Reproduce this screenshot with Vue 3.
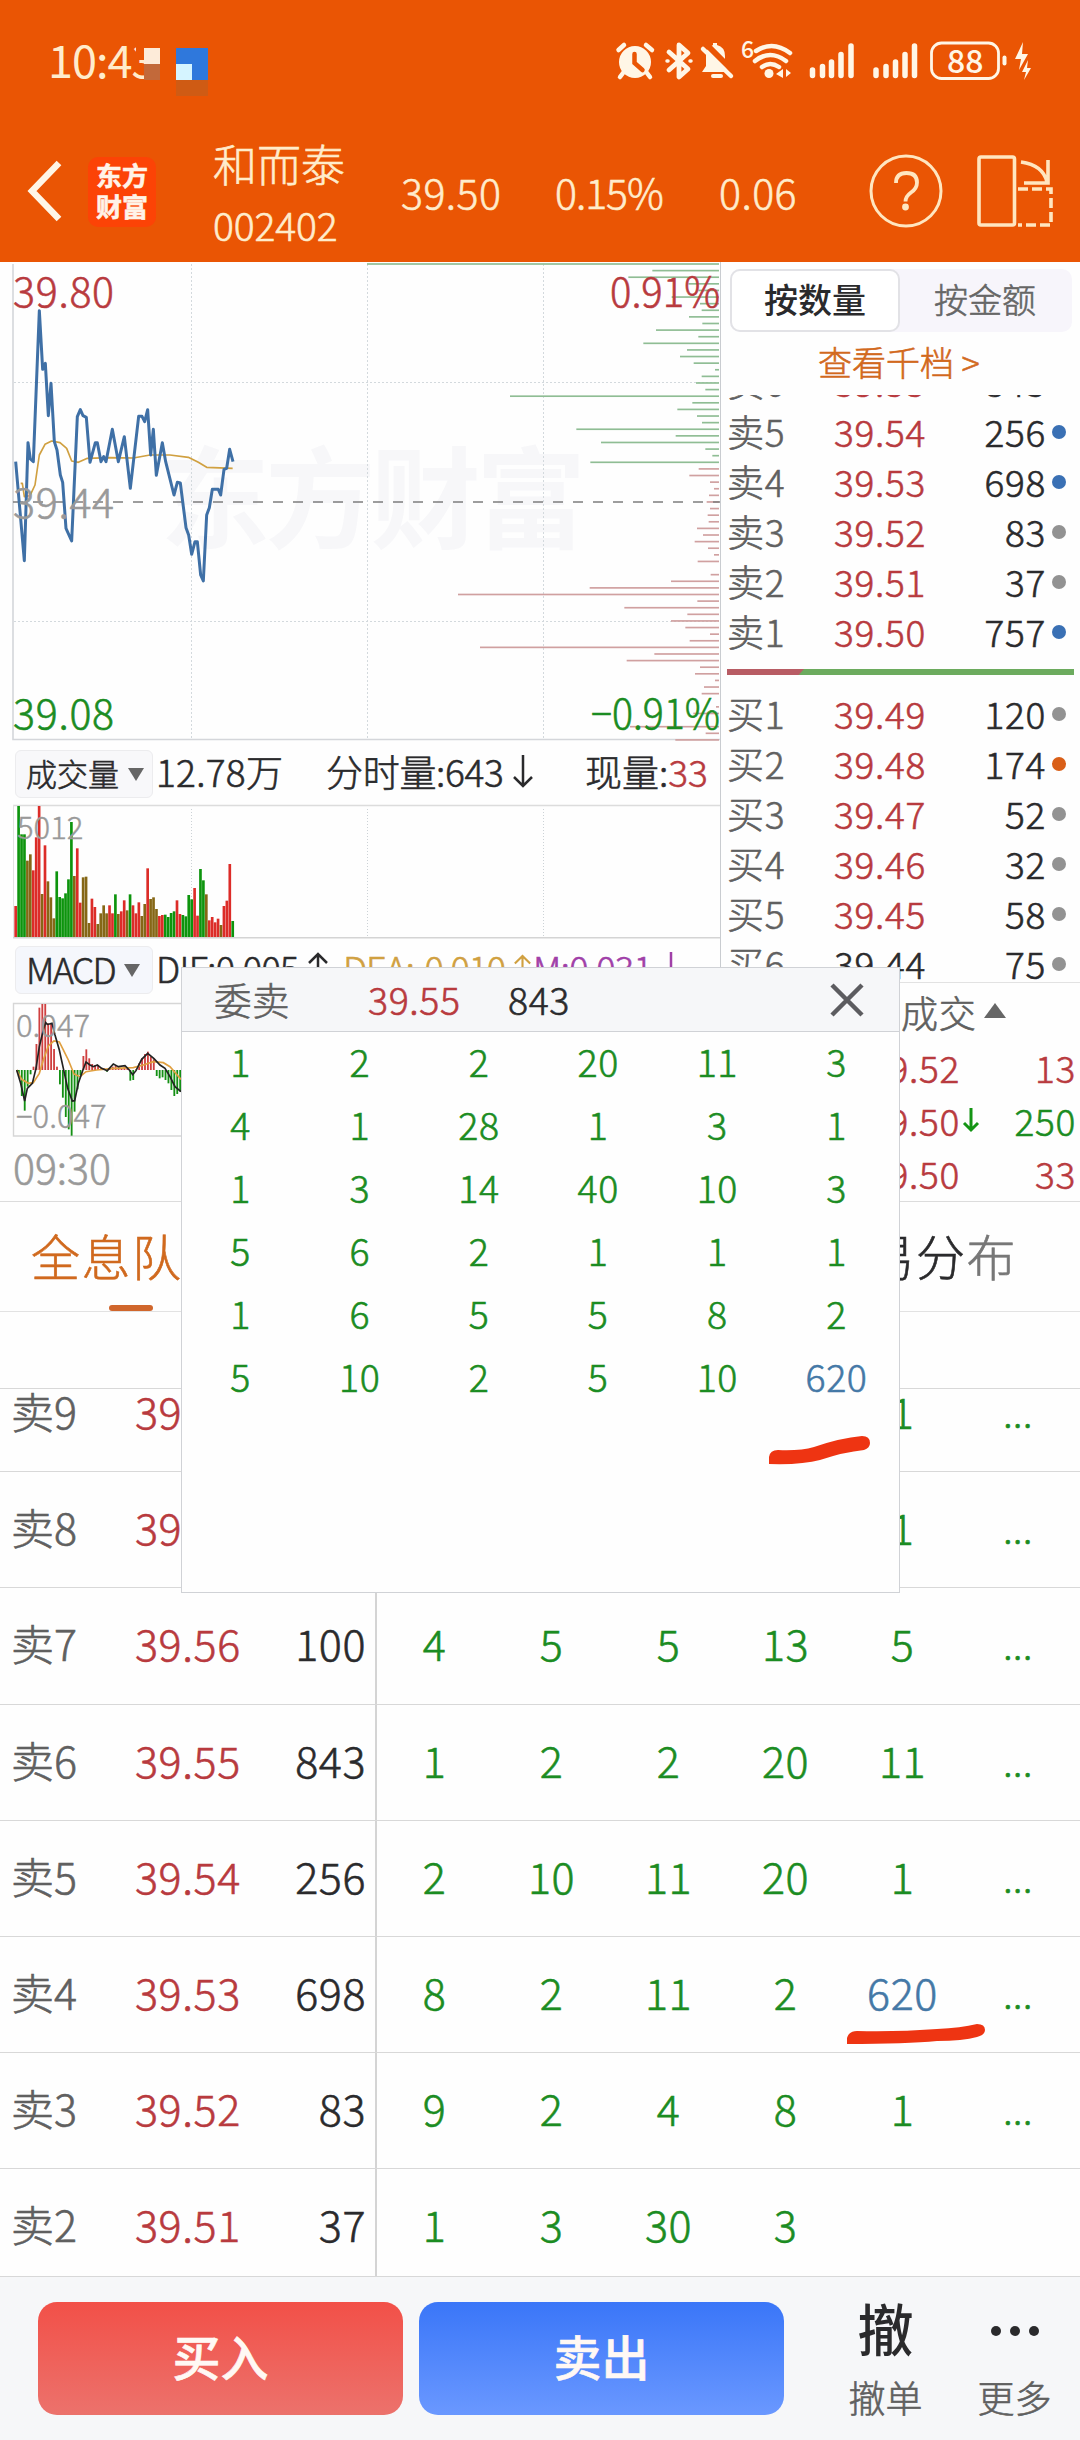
<template>
  <div class="page">
    <header class="top">
      <div class="status">
        <div class="clock">
          10:43
          <i class="erase"></i>
          <i class="px white"></i>
          <i class="px brown"></i>
          <i class="px blue"></i>
          <i class="px light"></i>
          <i class="px shade"></i>
        </div>
        <svg class="status-icons" width="422" height="44" viewBox="612 40 422 44">
          <g fill="none" stroke="#fff6e6" stroke-width="4.5" stroke-linecap="round">
            <circle cx="635" cy="62" r="16" fill="#fff6e6" stroke="none" />
            <path d="M618.500 50l5.500-5M652 50l-6-5M623 73l-3 4M647 73l3 4" />
            <path d="M634.500 54v9l8 7" stroke="#ea5504" stroke-width="4.500" />
            <path d="M669 52l19 17-9 8V45l9 8-19 17" stroke-width="4.800" stroke-linejoin="round" />
            <path d="M667 61h1M690 61h1" stroke-width="3.500" />
            <path d="M702 72h27l-4-6V56q0-9-8-11v-2h-4v2q-7 3-7 10v11z" fill="#fff6e6" stroke="none" />
            <path d="M705 43l32 32" stroke="#ea5504" stroke-width="6" />
            <path d="M703 49l28 27" />
            <path d="M713 76h8" stroke-width="4" />
            <path d="M756 51q17-11 34 2M755 61q15-12 31 0M762 67q8-6 17 0" stroke-width="4.500" />
            <circle cx="769" cy="73.500" r="4.500" fill="#fff6e6" stroke="none" />
            <path d="M776 74l7-5v9zM786 69l5 4-5 4z" fill="#fff6e6" stroke="none" />
            <path d="M812.500 70v5.500M822.500 66.500v9M831.500 62v13.500M841 54.500v21M851 46v29.500" stroke-width="5.500" />
            <path d="M876 70v5.500M886 66.500v9M895.500 62v13.500M905 54.500v21M914.500 46v29.500" stroke-width="5.500" />
            <rect x="931.500" y="43" width="67" height="35.500" rx="10" stroke-width="2.800" />
            <path d="M1004.500 57.500v6" stroke-width="4" />
            <path d="M1023 42l-8 17h6l-2 11 9-16h-6zM1028 60l-6 12h4l-2 8 7-12h-4z" fill="#fff6e6" stroke="none" />
          </g>
          <text x="741" y="58" class="wifi-gen">6</text>
          <text x="947" y="73" class="battery">88</text>
        </svg>
      </div>
      <div class="nav">
        <svg class="back" width="40" height="66" viewBox="0 0 40 66">
          <path d="M35 5L8 33l27 28" fill="none" stroke="#fff6e6" stroke-width="6.500" />
        </svg>
        <div class="logo"><span>东方</span><span>财富</span></div>
        <div class="stock">
          <div class="name">和而泰</div>
          <div class="code">002402</div>
        </div>
        <div class="quote">
          <span class="q1">39.50</span>
          <span class="q2">0.15%</span>
          <span class="q3">0.06</span>
        </div>
        <svg class="help" width="76" height="76" viewBox="0 0 76 76" fill="none" stroke="#ffe6c0" stroke-width="3">
          <circle cx="37" cy="38" r="35" />
          <path d="M27 30q0-10 10.500-10T48 29.500q0 6-6 10-5.500 4-5.500 9" stroke-width="3.800" />
          <circle cx="36.500" cy="54" r="1.900" fill="#ffe6c0" />
        </svg>
        <svg class="rotate" width="78" height="74" viewBox="0 0 78 74" fill="none" stroke="#ffe6c0" stroke-width="3.600">
          <rect x="2" y="3" width="35.500" height="68" rx="2" />
          <path d="M44 8q22 3 26 20M71 6v23H47" />
          <path d="M41 35h33v36H41" stroke-dasharray="10 4" />
        </svg>
      </div>
    </header>

    <section class="market">
      <div class="charts">
        <svg width="720" height="482" viewBox="0 262 720 482">
          <text x="160" y="540" class="watermark" textLength="426">东方财富</text>
          <g stroke="#d3d9dd" stroke-width="1" stroke-dasharray="2 2">
            <path d="M191.500 264V738M367.500 264V738M543.500 264V738M14 382.500H719M14 621.500H719" />
          </g>
          <path d="M13 264V739.500H720" fill="none" stroke="#d4d6da" stroke-width="1.600" />
          <g transform="translate(340 255) scale(.33333)">
            <rect
              v-for="(w, i) in depth"
              :key="i"
              :x="1137 - w"
              :y="24.500 + i * 19.83"
              :width="w"
              height="5"
              :fill="i < 31 ? '#8fbd94' : '#d0a0a0'"
            />
          </g>
          <path d="M13 502H720" stroke="#7d7d7d" stroke-width="1.700" stroke-dasharray="10 10" />
          <g transform="translate(0 255) scale(.33333)" fill="none" stroke-linejoin="round">
            <polyline :points="avgLine" stroke="#d0a040" stroke-width="5" />
            <polyline :points="priceLine" stroke="#3f70a6" stroke-width="9" />
          </g>
          <text x="13" y="307" class="axis red" textLength="101">39.80</text>
          <text x="13" y="518" class="axis gray" textLength="101">39.44</text>
          <text x="13" y="728.500" class="axis green" textLength="101">39.08</text>
          <text x="610" y="307" class="axis red" textLength="110" lengthAdjust="spacingAndGlyphs">0.91%</text>
          <text x="591" y="728.500" class="axis green" textLength="129" lengthAdjust="spacingAndGlyphs">−0.91%</text>
        </svg>

        <div class="info">
          <div class="select">成交量<i></i></div>
          <span class="total">12.78万</span>
          <span class="minute">分时量:643<svg width="20" height="34" viewBox="0 0 20 34"><path d="M10 1v31M1 23l9 9 9-9" /></svg></span>
          <span>现量:<b class="red">33</b></span>
        </div>

        <svg width="720" height="135" viewBox="0 804 720 135">
          <path d="M13 805.500H720" stroke="#dcdcdc" stroke-width="1.300" />
          <path d="M13.500 805V938" stroke="#e2e2e2" />
          <path d="M191.500 809V936M367.500 809V936M543.500 809V936" stroke="#ccd2d6" stroke-dasharray="1 2" />
          <g transform="translate(0 740) scale(.33333)">
            <rect
              v-for="(v, i) in volumes"
              :key="i"
              :x="43 + i * 8.800"
              :y="v[0]"
              width="8"
              :height="593 - v[0]"
              :fill="volumeColor[v[1]]"
            />
          </g>
          <text x="17" y="839" class="small-axis">5012</text>
          <path d="M13 937.700H720" stroke="#d4d4d4" stroke-width="1.600" />
        </svg>

        <div class="info macd">
          <div class="select">MACD<i></i></div>
          <span class="dif">DIF:0.005<svg width="20" height="30" viewBox="0 0 20 30"><path d="M10 30V2M1 11l9-9 9 9" /></svg></span>
          <span class="dea">DEA:-0.010<svg width="17" height="30" viewBox="0 0 20 30"><path d="M10 30V2M1 11l9-9 9 9" /></svg></span>
          <span class="m">M:0.031<svg width="20" height="30" viewBox="0 0 20 30"><path d="M10 0v28M1 19l9 9 9-9" /></svg></span>
        </div>

        <svg width="720" height="138" viewBox="0 1001 720 138">
          <path d="M720 1003.500H13.500V1136H720" fill="none" stroke="#d6d6d6" stroke-width="1.400" />
          <g transform="translate(0 740) scale(.33333)" fill="none">
            <rect
              v-for="(v, i) in macdBars"
              :key="i"
              :x="45 + i * 8.800"
              :y="Math.min(v, 990)"
              width="5.500"
              :height="Math.abs(v - 990)"
              :fill="v < 990 ? '#cf4040' : '#149014'"
            />
            <polyline :points="deaLine" stroke="#e0a040" stroke-width="5" />
            <polyline :points="difLine" stroke="#222" stroke-width="5" />
          </g>
          <text x="16" y="1036.500" class="small-axis">0.047</text>
          <text x="16" y="1127.500" class="small-axis">−0.047</text>
        </svg>
        <div class="time">09:30</div>
      </div>

      <aside class="book">
        <div class="switch">
          <span class="on">按数量</span>
          <span>按金额</span>
        </div>
        <div class="more-levels">查看千档 &gt;</div>
        <div class="levels sells">
          <div v-for="r in sells" :key="r.name" class="level">
            <span>{{ r.name }}</span>
            <span class="price">{{ r.price }}</span>
            <span class="qty">{{ r.qty }}</span>
            <i :class="['dot', r.dot]"></i>
          </div>
        </div>
        <div class="ratio"><i></i></div>
        <div class="levels buys">
          <div v-for="r in buys" :key="r.name" class="level">
            <span>{{ r.name }}</span>
            <span :class="['price', { flat: r.price === '39.44' }]">{{ r.price }}</span>
            <span class="qty">{{ r.qty }}</span>
            <i :class="['dot', r.dot]"></i>
          </div>
        </div>
        <div class="trades-head">成交<i></i></div>
        <div v-for="(t, i) in trades" :key="i" class="trade">
          <span class="red">{{ t.price }}</span>
          <svg width="18" height="26" viewBox="0 0 18 26">
            <path v-if="t.down" d="M9 1v22M2 16l7 7 7-7" fill="none" stroke="#149414" stroke-width="3" />
          </svg>
          <span :class="['vol', t.down ? 'green' : 'red']">{{ t.qty }}</span>
        </div>
      </aside>
    </section>

    <nav class="tabs">
      <div class="tab active">全息队列</div>
      <div class="tab last">交易分<span>布</span></div>
    </nav>
    <div class="spacer"></div>

    <section class="queue">
      <div v-for="r in queue" :key="r.name" class="row">
        <div class="left">
          <span class="label">{{ r.name }}</span>
          <span class="red">{{ r.price }}</span>
          <span class="qty">{{ r.qty }}</span>
        </div>
        <div class="orders">
          <span v-for="(n, i) in r.orders" :key="i" :class="{ big: n === 620, dots: n === '...' }">{{ n }}</span>
        </div>
      </div>
    </section>

    <footer class="actions">
      <button class="buy">买入</button>
      <button class="sell">卖出</button>
      <div class="action">
        <div class="glyph">撤</div>
        <div>撤单</div>
      </div>
      <div class="action">
        <div class="glyph dots3"><i></i><i></i><i></i></div>
        <div>更多</div>
      </div>
    </footer>

    <div class="popup">
      <div class="popup-head">
        <span class="side">委卖</span>
        <span class="red pr">39.55</span>
        <span>843</span>
        <svg class="close" width="34" height="34" viewBox="0 0 34 34">
          <path d="M2 2l30 30M32 2L2 32" stroke="#5c5c60" stroke-width="4.500" />
        </svg>
      </div>
      <div class="popup-grid">
        <span v-for="(n, i) in popupOrders" :key="i" :class="{ big: n === 620 }">{{ n }}</span>
      </div>
    </div>

    <svg class="marks" width="1080" height="2440" viewBox="0 0 1080 2440">
      <path d="M769 1464v-7q1-7 9-7 22 1 36-3 26-9 48-11 8 0 8 7 0 5-6 7-20 2-44 10-18 5-51 4z" />
      <path d="M847 2044v-6q2-7 10-7 40 1 80-2 24-1 40-5 8 0 8 6 0 5-8 7-14 4-40 4-30 3-90 3z" />
    </svg>
  </div>
</template>

<script setup>
const priceLine =
  "47,620 73,917 84,563 91,612 100,620 118,167 128,343 136,325 145,482 153,385 163,560 171,585 181,660 188,682 198,820 215,858 232,485 241,464 249,482 259,487 270,622 286,563 292,563 303,620 311,605 318,620 337,523 355,620 373,545 391,700 416,484 426,484 434,500 443,464 452,600 460,523 469,661 487,563 497,620 522,720 532,682 541,684 558,818 566,840 575,898 585,860 592,860 602,960 610,978 620,780 628,758 637,703 655,703 662,720 672,643 680,640 689,583 699,620";
const avgLine =
  "62,685 67,685 73,725 90,722 105,690 118,600 135,568 155,558 180,563 200,580 215,618 235,622 262,610 330,608 400,609 450,600 510,600 565,607 595,622 620,637 698,640";
const difLine =
  "50,990 62,1030 74,1083 82,1045 97,1030 108,985 118,920 130,870 137,848 142,853 148,852 156,850 165,885 178,930 190,985 203,1045 217,1083 224,1082 235,1030 248,992 258,966 270,975 280,980 292,975 305,985 322,992 340,972 355,980 375,977 388,990 398,1004 408,992 425,958 443,940 462,956 480,975 495,985 510,1010 525,1040 543,1055";
const deaLine =
  "50,990 65,1018 85,1030 100,1028 118,1000 130,960 145,918 162,903 178,906 190,930 205,960 222,1002 240,1010 258,995 290,990 340,985 400,983 430,975 460,965 490,968 510,980 543,1018";

// resting orders per price, sell side first
const depth = [
  1056, 200, 272, 92, 62, 142, 57, 52, 90, 50, 189, 62, 227, 96, 117, 76, 12, 52, 69, 41, 627, 80, 125, 66, 51, 428,
  130, 354, 41, 20, 386, 61, 89, 27, 15, 30, 37, 27, 34, 31, 66, 48, 73, 33, 15, 64, 0, 25, 144, 388, 783, 65, 284, 95,
  144, 101, 27, 88, 717, 194, 277, 57, 72, 12, 45, 52, 0, 9, 77, 0, 267, 40, 131,
];

const volumeColor = { r: "#dc2c28", g: "#0d940d", b: "#856716" };
const volumes = (
  "498r 198g 283g 283g 362b 343b 391r 292r 198r 462b 316r 424b 472b 535b 394g 471g 475g 460g 418g 246g 408b 325r 488r 412b 410b 549b " +
  "476r 501r 552b 520b 496b 520b 496r 520r 463g 522b 514r 481r 511b 463g 496r 520r 487r 528b 492b 385r 477b 472b 507b 528r 525r 524g " +
  "531g 519g 514g 481r 522r 525g 529g 465g 478g 444r 527r 387g 421g 463b 541r 531r 547r 536r 555b 498r 482r 372r 543g"
)
  .split(" ")
  .map((s) => [parseInt(s), s.slice(-1)]);

const macdBars = [
  990, 1010, 1068, 1112, 1040, 1003, 980, 912, 803, 792, 792, 850, 850, 927, 980, 1033, 1073, 1131, 1168, 1187, 1115,
  1048, 1005, 948, 928, 955, 972, 975, 978, 985, 985, 995, 986, 980, 978, 982, 985, 980, 985, 1022, 1020, 988, 970, 955,
  942, 935, 950, 958, 1008, 1015, 1012, 1020, 1030, 1050, 1068, 1062, 1055,
];

const sells = [
  { name: "卖6", price: "39.55", qty: 843, dot: "none" },
  { name: "卖5", price: "39.54", qty: 256, dot: "blue" },
  { name: "卖4", price: "39.53", qty: 698, dot: "blue" },
  { name: "卖3", price: "39.52", qty: 83, dot: "" },
  { name: "卖2", price: "39.51", qty: 37, dot: "" },
  { name: "卖1", price: "39.50", qty: 757, dot: "blue" },
];
const buys = [
  { name: "买1", price: "39.49", qty: 120, dot: "" },
  { name: "买2", price: "39.48", qty: 174, dot: "orange" },
  { name: "买3", price: "39.47", qty: 52, dot: "" },
  { name: "买4", price: "39.46", qty: 32, dot: "" },
  { name: "买5", price: "39.45", qty: 58, dot: "" },
  { name: "买6", price: "39.44", qty: 75, dot: "" },
];
const trades = [
  { price: "39.52", qty: 13 },
  { price: "39.50", qty: 250, down: true },
  { price: "39.50", qty: 33 },
];

const queue = [
  { name: "卖9", price: "39.58", qty: "", orders: ["", "", "", "", 1, "..."] },
  { name: "卖8", price: "39.57", qty: "", orders: ["", "", "", "", 1, "..."] },
  { name: "卖7", price: "39.56", qty: 100, orders: [4, 5, 5, 13, 5, "..."] },
  { name: "卖6", price: "39.55", qty: 843, orders: [1, 2, 2, 20, 11, "..."] },
  { name: "卖5", price: "39.54", qty: 256, orders: [2, 10, 11, 20, 1, "..."] },
  { name: "卖4", price: "39.53", qty: 698, orders: [8, 2, 11, 2, 620, "..."] },
  { name: "卖3", price: "39.52", qty: 83, orders: [9, 2, 4, 8, 1, "..."] },
  { name: "卖2", price: "39.51", qty: 37, orders: [1, 3, 30, 3] },
];

const popupOrders = [
  1, 2, 2, 20, 11, 3, 4, 1, 28, 1, 3, 1, 1, 3, 14, 40, 10, 3, 5, 6, 2, 1, 1, 1, 1, 6, 5, 5, 8, 2, 5, 10, 2, 5, 10, 620,
];
</script>

<style>
body {
  background: #fefefe;
}
</style>

<style scoped>
.page {
  position: relative;
  width: 1080px;
  height: 2440px;
  overflow: hidden;
  background: #fefefe;
  color: #2a2a2c;
  font-family: "Noto Sans CJK SC", sans-serif;
  font-weight: 300;
  -webkit-text-stroke: 0.6px;
}
.page * {
  box-sizing: border-box;
}
.page svg {
  display: block;
  flex: none;
}
.page span {
  white-space: nowrap;
}
.red {
  color: #b83a3e;
  fill: #b83a3e;
  stroke: #b83a3e;
  font-weight: inherit;
}
.green {
  color: #1b8c22;
  fill: #1b8c22;
  stroke: #1b8c22;
}

/* header */
.top {
  height: 262px;
  background: #ea5504;
  color: #ffeccc;
}
.status {
  display: flex;
  justify-content: space-between;
  height: 120px;
  padding: 40px 46px 0 48px;
}
.clock {
  position: relative;
  height: 44px;
  font-size: 45px;
  line-height: 37px;
  letter-spacing: -1px;
  font-weight: 400;
  -webkit-text-stroke: 0;
}
.clock i {
  position: absolute;
}
.erase {
  left: 88px;
  top: 4px;
  width: 26px;
  height: 16px;
  background: #ea5504;
}
.px {
  width: 16px;
  height: 16px;
}
.px.white {
  left: 96px;
  top: 8px;
  background: #fdebd9;
}
.px.brown {
  left: 96px;
  top: 24px;
  background: #c2693a;
}
.px.blue {
  left: 128px;
  top: 8px;
  width: 32px;
  height: 32px;
  background: #2f78dc;
}
.px.light {
  left: 128px;
  top: 24px;
  background: #d5f4ff;
}
.px.shade {
  left: 128px;
  top: 40px;
  width: 32px;
  background: #cf5b14;
}
.wifi-gen {
  font-size: 23px;
  font-weight: 500;
  fill: #fff6e6;
}
.battery {
  font-size: 32px;
  font-weight: 500;
  fill: #fff6e6;
}
.nav {
  display: flex;
  align-items: center;
  height: 142px;
  padding-left: 24px;
}
.logo {
  display: flex;
  flex-direction: column;
  align-items: center;
  justify-content: center;
  width: 68px;
  height: 70px;
  margin: 1px 0 0 24px;
  padding-bottom: 4px;
  border-radius: 10px;
  background: #fc4306;
  color: #fff3e8;
  font-size: 26px;
  font-weight: 700;
  line-height: 31px;
}
.stock {
  width: 188px;
  margin: 10px 0 0 57px;
}
.name {
  font-size: 44px;
  line-height: 56px;
}
.code {
  font-size: 39px;
  line-height: 66px;
  letter-spacing: -0.1px;
}
.quote {
  display: flex;
  width: 468px;
  font-size: 41px;
  letter-spacing: 0.5px;
}
.q1 {
  width: 154px;
}
.q2 {
  width: 164px;
  letter-spacing: -1px;
}
.rotate {
  margin-left: 32px;
}

/* charts and order book */
.market {
  display: flex;
  height: 940px;
  border-bottom: 1px solid #dcdcdc;
}
.charts {
  width: 721px;
  border-right: 1px solid #c9ccd0;
}
.watermark {
  font-size: 110px;
  font-weight: 700;
  fill: #f7f7f9;
}
.axis {
  font-size: 41px;
  stroke-width: 0.6px;
}
.axis.gray {
  fill: #999;
  stroke: #999;
}
.small-axis {
  font-size: 31px;
  fill: #999;
  stroke: #999;
  stroke-width: 0.4px;
}
.info {
  display: flex;
  align-items: center;
  height: 60px;
  padding-left: 15px;
  font-size: 37px;
}
.info span {
  display: flex;
  align-items: center;
  padding-bottom: 6px;
}
.info b {
  -webkit-text-stroke: 0.6px;
}
.info svg {
  margin-left: 9px;
  fill: none;
  stroke: currentColor;
  stroke-width: 2.5;
}
.select {
  display: flex;
  align-items: center;
  width: 138px;
  height: 48px;
  padding: 0 0 4px 10px;
  margin-right: 3px;
  border: 1px solid #ececee;
  border-radius: 6px;
  background: #f8f8fa;
  font-size: 31px;
}
.select i {
  margin: 4px 0 0 9px;
  border: 8px solid transparent;
  border-top: 13px solid #666;
  border-bottom: 0;
}
.total {
  width: 170px;
  letter-spacing: 0.3px;
}
.minute {
  width: 259px;
  letter-spacing: -0.3px;
}
.macd {
  height: 62px;
  font-size: 36px;
  letter-spacing: -0.6px;
}
.macd .select {
  font-size: 36px;
  letter-spacing: -1.7px;
  background: #f5f7fc;
}
.dif {
  width: 187px;
}
.dea {
  width: 190px;
  color: #d0a040;
  letter-spacing: -1.1px;
}
.m {
  color: #a040a8;
}
.time {
  padding-left: 13px;
  font-size: 41px;
  line-height: 54px;
  color: #999;
}
.book {
  display: flex;
  flex-direction: column;
  width: 359px;
  padding-top: 7px;
  font-size: 37px;
  letter-spacing: 0.7px;
}
.switch {
  display: flex;
  width: 342px;
  height: 63px;
  margin-left: 9px;
  border-radius: 10px;
  background: #f7f5fb;
  font-size: 34px;
  line-height: 60px;
  letter-spacing: 0;
  color: #666;
}
.switch span {
  width: 170px;
  text-align: center;
}
.switch .on {
  border: 2px solid #e2e2e6;
  border-radius: 10px;
  background: #fff;
  color: #2a2a2c;
  font-weight: 500;
  line-height: 56px;
  -webkit-text-stroke: 0;
}
.more-levels {
  height: 63px;
  padding-left: 97px;
  font-size: 34px;
  line-height: 60px;
  letter-spacing: 0;
  color: #d2691e;
}
.levels {
  display: flex;
  flex-direction: column;
  overflow: hidden;
}
.sells {
  justify-content: flex-end;
  height: 260px;
}
.buys {
  height: 296px;
  border-bottom: 1px solid #e2e2e2;
}
.level {
  display: grid;
  grid-template-columns: 107px 120px 92px 1fr;
  flex: none;
  align-items: center;
  height: 50px;
  padding-left: 6px;
  line-height: 50px;
  color: #606060;
}
.level span {
  padding-top: 1px;
}
.level .price {
  color: #b83a3e;
}
.level .price.flat,
.level .qty {
  color: #2a2a2c;
}
.level .qty {
  text-align: right;
}
.dot {
  width: 14px;
  height: 14px;
  margin: 2px 0 0 6px;
  border-radius: 50%;
  background: #929292;
}
.dot.blue {
  background: #3a70b4;
}
.dot.orange {
  background: #d95f18;
}
.dot.none {
  visibility: hidden;
}
.ratio {
  width: 347px;
  height: 6px;
  margin: 14px 0 12px 6px;
  background: #6cab5e;
}
.ratio i {
  display: block;
  width: 77px;
  height: 6px;
  background: #b85c64;
  clip-path: polygon(0 0, 100% 0, 93% 100%, 0 100%);
}
.trades-head {
  display: flex;
  align-items: center;
  height: 57px;
  padding-left: 180px;
  line-height: 52px;
  color: #606060;
}
.trades-head i {
  margin: -2px 0 0 8px;
  border: 11px solid transparent;
  border-top: 0;
  border-bottom: 15px solid #666;
}
.trade {
  display: flex;
  align-items: center;
  height: 52.700px;
  padding: 2px 4px 0 147px;
}
.trade svg {
  margin-left: 2px;
}
.vol {
  flex: 1;
  text-align: right;
}

/* tabs */
.tabs {
  display: flex;
  justify-content: space-between;
  height: 110px;
  padding: 0 63px 0 31px;
  border-bottom: 1px solid #e2e2e2;
  font-size: 49px;
  letter-spacing: 1.5px;
  line-height: 106px;
}
.active {
  position: relative;
  color: #d0691e;
}
.active::after {
  content: "";
  position: absolute;
  left: 78px;
  bottom: 0;
  width: 44px;
  height: 6px;
  border-radius: 3px;
  background: #d0662c;
}
.last span {
  color: #777;
}
.spacer {
  height: 77px;
  border-bottom: 1px solid #d8d8d8;
}

/* order queue */
.queue {
  height: 887px;
  overflow: hidden;
  font-size: 43px;
  letter-spacing: 0.6px;
}
.row {
  display: flex;
  height: 116.200px;
  border-bottom: 1.500px solid #d8d8d8;
  line-height: 109px;
}
.row:first-child {
  margin-top: -33px;
}
.left {
  display: grid;
  grid-template-columns: 124px 120px 1fr;
  width: 377px;
  padding: 0 9px 0 11px;
  border-right: 2px solid #d4d4d4;
}
.label {
  color: #606060;
  letter-spacing: 0;
}
.left .qty {
  text-align: right;
}
.orders {
  display: grid;
  grid-template-columns: repeat(6, 117px);
  width: 703px;
  margin-left: -1px;
  text-align: center;
  color: #1b8c22;
}
.orders .dots {
  padding-right: 3px;
  font-size: 37px;
  line-height: 113px;
}
.page .big {
  color: #4478a6;
}

/* footer */
.actions {
  display: flex;
  align-items: flex-start;
  height: 165px;
  padding: 25px 0 0 38px;
  border-top: 1px solid #d8d8d8;
  background: #f6f7f9;
}
.actions button {
  width: 365px;
  height: 113px;
  margin-right: 16px;
  padding: 0 0 7px;
  border: 0;
  border-radius: 19px;
  color: #fff8f4;
  font-family: inherit;
  font-size: 48px;
  font-weight: 500;
}
.buy {
  background: linear-gradient(#f25048, #ec726c);
}
.sell {
  background: linear-gradient(#3a76f8, #6a98ff);
}
.action {
  width: 129px;
  font-size: 37px;
  line-height: 50px;
  text-align: center;
  color: #606060;
}
.action:nth-child(3) {
  margin-left: 21px;
}
.glyph {
  height: 70px;
  color: #2a2a2c;
  font-size: 56px;
  font-weight: 500;
  line-height: 49px;
  -webkit-text-stroke: 0;
}
.dots3 {
  display: flex;
  justify-content: center;
  gap: 9px;
  padding-top: 24px;
}
.dots3 i {
  width: 10px;
  height: 10px;
  border-radius: 50%;
  background: #2a2a2c;
}

/* order detail popup */
.popup {
  position: absolute;
  left: 181px;
  top: 967px;
  width: 719px;
  height: 626px;
  border: 1px solid #d0d2d6;
  background: #fefefe;
  font-size: 37.500px;
  letter-spacing: 0.6px;
}
.popup-head {
  display: flex;
  align-items: center;
  height: 64px;
  padding: 0 35px 0 32px;
  border-bottom: 1px solid #d0d2d6;
  background: #f6f7f9;
  line-height: 57px;
}
.popup-head span {
  padding-bottom: 2px;
}
.side {
  width: 154px;
  color: #606060;
}
.pr {
  width: 140px;
}
.close {
  margin-left: auto;
}
.popup-grid {
  display: grid;
  grid-template-columns: repeat(6, 119.200px);
  margin: -3px 0 0 -1px;
  line-height: 63px;
  text-align: center;
  color: #1b8c22;
}
.marks {
  position: absolute;
  left: 0;
  top: 0;
  fill: #ee3412;
  pointer-events: none;
}
</style>
